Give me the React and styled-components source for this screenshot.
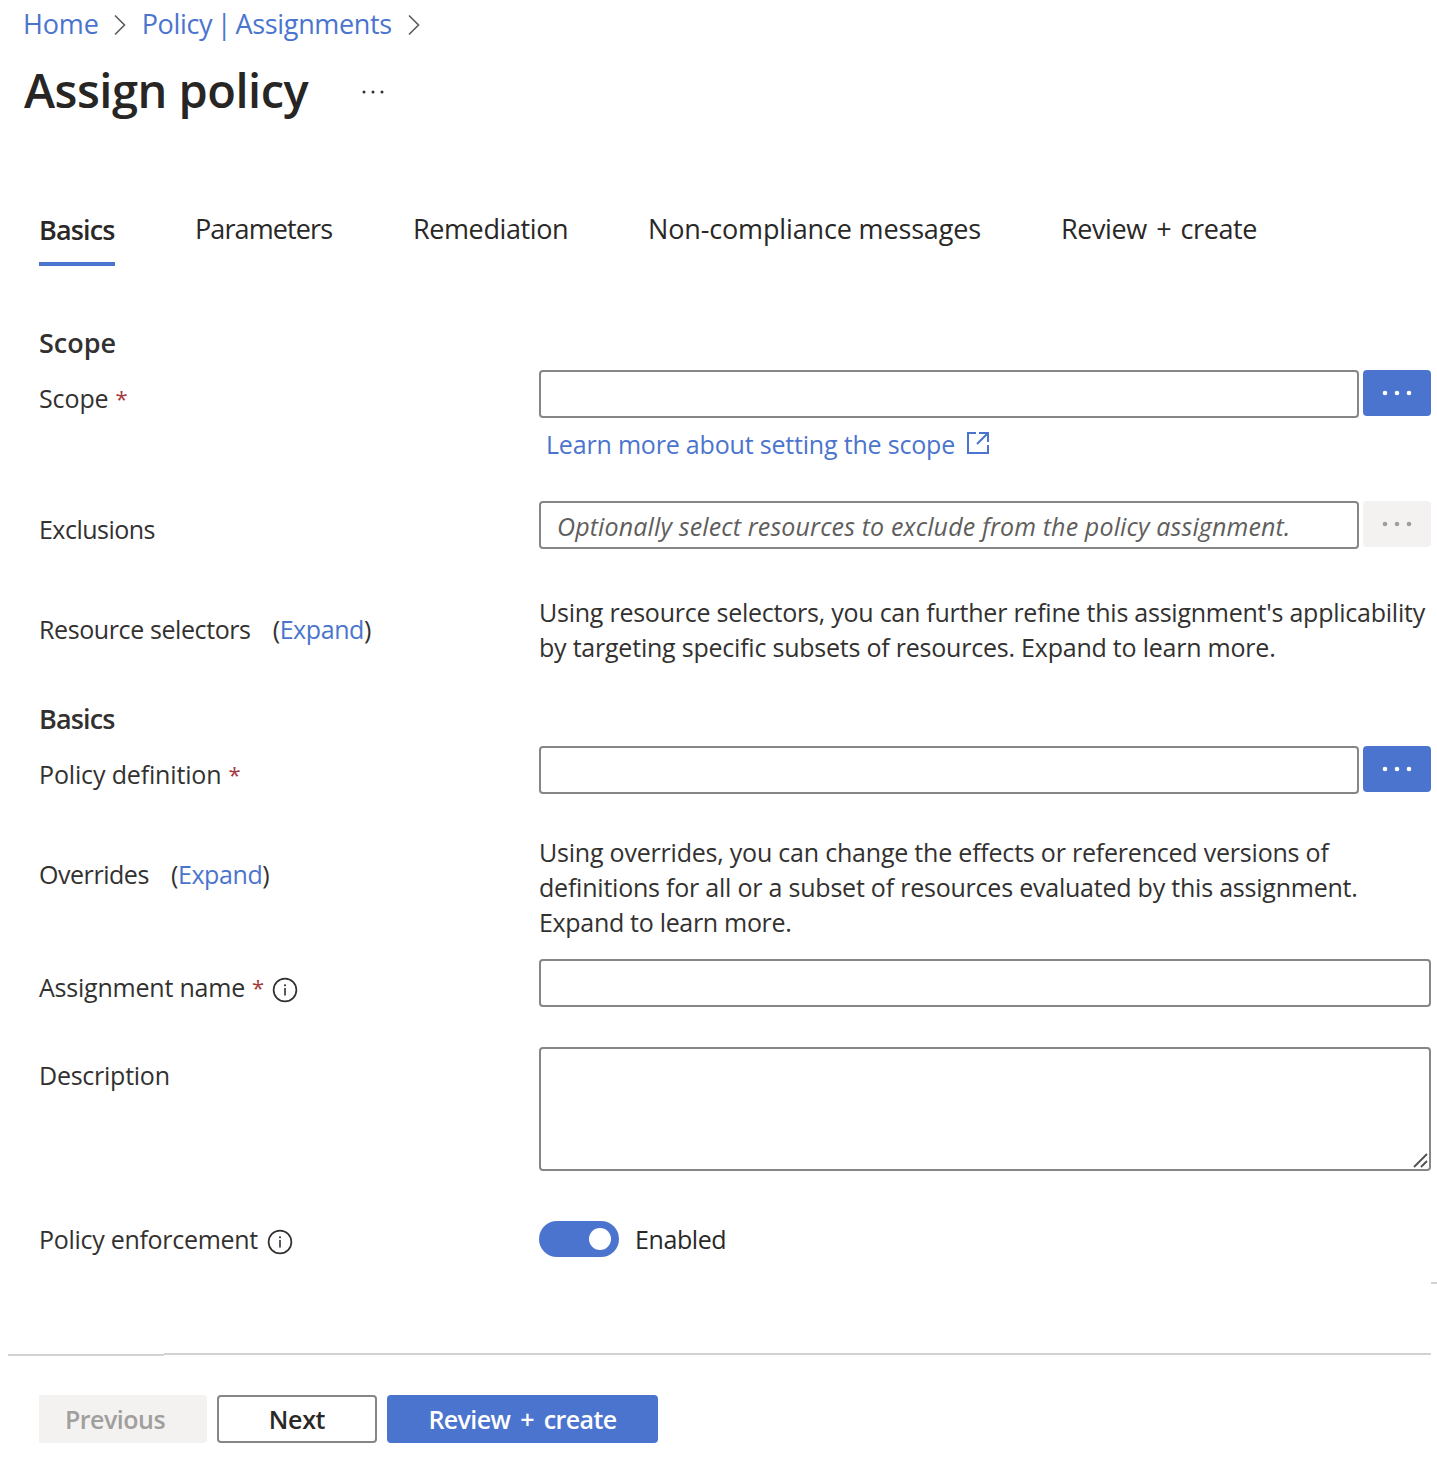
import React from "react";
import styled, { createGlobalStyle } from "styled-components";

const blue = "#4b74ce";
const ink = "#323130";
const line = "#868686";

const Global = createGlobalStyle`
  *, *::before, *::after { box-sizing: border-box; }
  body { margin: 0; background: #fff; }
  button, input, textarea { font: inherit; margin: 0; }
`;

const Page = styled.div`
  width: 1437px;
  height: 1460px;
  overflow: hidden;
  display: flex;
  flex-direction: column;
  background: #fff;
  color: ${ink};
  font-family: "Open Sans", "Noto Sans", sans-serif;
  font-size: 25px;
  line-height: 35px;
`;

const Tracked = styled.span`
  letter-spacing: ${(p) => p.$track || 0}px;
  white-space: nowrap;
`;

const Link = styled.a`
  color: ${blue};
  text-decoration: none;
  white-space: nowrap;
  letter-spacing: ${(p) => p.$track || 0}px;
  word-spacing: ${(p) => p.$words || 0}px;
`;

const Breadcrumb = styled.nav`
  display: flex;
  align-items: flex-start;
  height: 58px;
  padding: 6px 0 0 23px;
  font-size: 27px;
  line-height: 36px;
`;

const Chevron = styled.svg`
  flex: none;
  width: 12px;
  height: 22px;
  margin: 8px ${(p) => p.$after}px 0 ${(p) => p.$before}px;
  fill: none;
  stroke: #5c5b5a;
  stroke-width: 1.6;
`;

const TitleBar = styled.header`
  display: flex;
  height: 153px;
  padding-left: 24px;
`;

const Title = styled.h1`
  margin: 0;
  width: 337px;
  font-size: 47px;
  font-weight: 600;
  line-height: 64px;
  letter-spacing: -0.5px;
  color: #272625;
`;

const TitleMenu = styled.svg`
  width: 24px;
  height: 4px;
  margin-top: 32px;
  fill: ${ink};
`;

const Tabs = styled.div`
  display: flex;
  height: 114px;
  padding-left: 39px;
  font-size: 27px;
  line-height: 36px;
  color: #292827;
`;

const Tab = styled.div`
  flex: none;
  height: 55px;
  width: ${(p) => p.$width}px;
  margin-right: ${(p) => p.$gap}px;
  padding-top: ${(p) => (p.$active ? 1 : 0)}px;
  border-bottom: 4px solid ${(p) => (p.$active ? blue : "transparent")};
  font-weight: ${(p) => (p.$active ? 600 : 400)};
  letter-spacing: ${(p) => p.$track || 0}px;
  word-spacing: ${(p) => p.$words || 0}px;
  white-space: nowrap;
`;

const Heading = styled.h2`
  margin: 0;
  height: 45px;
  padding-left: 39px;
  font-size: 27px;
  font-weight: 600;
  line-height: 36px;
  letter-spacing: ${(p) => p.$track || 0}px;
`;

const Row = styled.div`
  display: grid;
  grid-template-columns: 500px 892px;
  height: ${(p) => p.$height}px;
  padding-left: 39px;
`;

const Label = styled.div`
  display: flex;
  align-items: flex-start;
  padding-top: ${(p) => (p.$top === undefined ? 11 : p.$top)}px;
`;

const Required = styled.span`
  width: 11px;
  margin-left: 7px;
  color: #a4373a;
  font-size: 22px;
  line-height: 34px;
`;

const Expand = styled.span`
  margin-left: ${(p) => p.$gap}px;
  letter-spacing: -0.4px;
`;

const InfoMark = styled.svg`
  width: 26px;
  height: 26px;
  margin: 7px 0 0 ${(p) => p.$gap}px;
`;

const Picker = styled.div`
  display: flex;
  align-items: flex-start;
  gap: 4px;
`;

const Input = styled.input`
  width: ${(p) => (p.$wide ? 892 : 820)}px;
  height: 48px;
  padding: 2px 16px 0;
  border: 2px solid ${line};
  border-radius: 4px;
  background: #fff;
  outline: none;
  letter-spacing: 0.14px;
  &::placeholder { color: #605e5c; font-style: italic; opacity: 1; }
`;

const PickButton = styled.button`
  display: flex;
  justify-content: center;
  width: 68px;
  height: 46px;
  padding: 20px 0 0;
  border: 0;
  border-radius: 4px;
  background: ${(p) => (p.disabled ? "#f3f2f1" : blue)};
  color: ${(p) => (p.disabled ? "#a19f9d" : "#fff")};
  svg { width: 30px; height: 6px; fill: currentColor; }
`;

const LearnMore = styled.div`
  display: flex;
  padding: 9px 0 0 7px;
`;

const ExternalMark = styled.svg`
  width: 24px;
  height: 24px;
  margin: 4px 0 0 11px;
  fill: none;
  stroke: ${blue};
  stroke-width: 2;
`;

const Lines = styled.div`
  display: flex;
  flex-direction: column;
`;

const Area = styled.div`
  display: flex;
  align-items: flex-end;
  justify-content: flex-end;
  width: 892px;
  height: 124px;
  border: 2px solid ${line};
  border-radius: 4px;
`;

const Grip = styled.svg`
  width: 16px;
  height: 16px;
  fill: none;
  stroke: #505050;
  stroke-width: 1.8;
`;

const Switch = styled.div`
  display: flex;
  align-items: center;
  justify-content: flex-end;
  width: 80px;
  height: 36px;
  margin-right: 16px;
  padding-right: 8px;
  border-radius: 18px;
  background: ${blue};
`;

const Knob = styled.span`
  width: 22px;
  height: 22px;
  border-radius: 50%;
  background: #fff;
`;

const SwitchField = styled.div`
  display: flex;
  align-items: flex-start;
`;

const SwitchText = styled.span`
  padding-top: 1px;
  letter-spacing: -0.4px;
  color: #292827;
`;

const EdgeTick = styled.div`
  align-self: flex-end;
  flex: none;
  width: 6px;
  height: 2px;
  background: #d2d2d2;
`;

const Divider = styled.div`
  display: flex;
  flex: none;
  height: 42px;
  margin-top: 69px;
  padding-left: 8px;
`;

const Rule = styled.div`
  width: ${(p) => p.$width}px;
  height: 2px;
  margin-top: ${(p) => p.$drop || 0}px;
  background: #d2d2d2;
`;

const Footer = styled.footer`
  display: flex;
  gap: 10px;
  padding-left: 39px;
`;

const looks = {
  off: `background: #f3f2f1; color: #a19f9d; border-color: #f3f2f1; border-radius: 0 4px 4px 0;`,
  plain: `background: #fff; color: #292827; border-color: ${line};`,
  primary: `background: ${blue}; color: #fff; border-color: ${blue};`,
};

const FootButton = styled.button`
  width: ${(p) => p.$width}px;
  height: 48px;
  padding: 1px ${(p) => p.$shift || 0}px 0 0;
  border: 2px solid;
  border-radius: 4px;
  font-weight: 600;
  line-height: 35px;
  letter-spacing: ${(p) => p.$track || 0}px;
  word-spacing: ${(p) => p.$words || 0}px;
  ${(p) => looks[p.$look]}
`;

const ChevronIcon = (props) => (
  <Chevron viewBox="0 0 12 22" {...props}>
    <path d="M1 1.5 10.5 11 1 20.5" />
  </Chevron>
);

const Dots = () => (
  <svg viewBox="0 0 30 6">
    <circle cx="3" cy="3" r="2.3" />
    <circle cx="15" cy="3" r="2.3" />
    <circle cx="27" cy="3" r="2.3" />
  </svg>
);

const Info = ({ gap }) => (
  <InfoMark viewBox="0 0 26 26" $gap={gap}>
    <circle cx="13" cy="13" r="11.4" fill="none" stroke={ink} strokeWidth="1.7" />
    <rect x="12.2" y="11" width="1.6" height="7.5" fill={ink} />
    <rect x="12.1" y="7.4" width="1.8" height="1.8" fill={ink} />
  </InfoMark>
);

export default function App() {
  return (
    <Page>
      <Global />
      <Breadcrumb>
        <Link $track={-0.15}>Home</Link>
        <ChevronIcon $before={15} $after={16} />
        <Link $track={-0.35} $words={-2.2}>Policy | Assignments</Link>
        <ChevronIcon $before={16} $after={0} />
      </Breadcrumb>
      <TitleBar>
        <Title>Assign policy</Title>
        <TitleMenu viewBox="0 0 24 4">
          <circle cx="3" cy="2" r="1.5" />
          <circle cx="12" cy="2" r="1.5" />
          <circle cx="21" cy="2" r="1.5" />
        </TitleMenu>
      </TitleBar>
      <Tabs>
        <Tab $active $width={76} $gap={80} $track={-0.85}>Basics</Tab>
        <Tab $width={138} $gap={80} $track={-0.9}>Parameters</Tab>
        <Tab $width={155} $gap={80} $track={-0.4}>Remediation</Tab>
        <Tab $width={333} $gap={80} $track={-0.15}>Non-compliance messages</Tab>
        <Tab $width={197} $gap={0} $track={-0.4} $words={2.7}>Review + create</Tab>
      </Tabs>
      <Heading>Scope</Heading>
      <Row $height={131}>
        <Label><Tracked $track={-0.1}>Scope</Tracked><Required>*</Required></Label>
        <div>
          <Picker><Input /><PickButton><Dots /></PickButton></Picker>
          <LearnMore>
            <Link $track={-0.19}>Learn more about setting the scope</Link>
            <ExternalMark viewBox="0 0 24 24">
              <path d="M10 2H2V22H22V14M13 2H22V11M22 2 11 13" />
            </ExternalMark>
          </LearnMore>
        </div>
      </Row>
      <Row $height={94}>
        <Label><Tracked $track={-0.52}>Exclusions</Tracked></Label>
        <Picker>
          <Input placeholder="Optionally select resources to exclude from the policy assignment." />
          <PickButton disabled><Dots /></PickButton>
        </Picker>
      </Row>
      <Row $height={106}>
        <Label $top={17}>
          <Tracked $track={-0.4}>Resource selectors</Tracked>
          <Expand $gap={22}>(<Link $track={-0.4}>Expand</Link>)</Expand>
        </Label>
        <Lines>
          <Tracked $track={-0.24}>Using resource selectors, you can further refine this assignment's applicability</Tracked>
          <Tracked $track={-0.22}>by targeting specific subsets of resources. Expand to learn more.</Tracked>
        </Lines>
      </Row>
      <Heading $track={-0.85}>Basics</Heading>
      <Row $height={89}>
        <Label><Tracked $track={-0.15}>Policy definition</Tracked><Required>*</Required></Label>
        <Picker><Input /><PickButton><Dots /></PickButton></Picker>
      </Row>
      <Row $height={124}>
        <Label $top={22}>
          <Tracked $track={-0.45}>Overrides</Tracked>
          <Expand $gap={22}>(<Link $track={-0.4}>Expand</Link>)</Expand>
        </Label>
        <Lines>
          <Tracked $track={-0.21}>Using overrides, you can change the effects or referenced versions of</Tracked>
          <Tracked $track={-0.22}>definitions for all or a subset of resources evaluated by this assignment.</Tracked>
          <Tracked $track={-0.31}>Expand to learn more.</Tracked>
        </Lines>
      </Row>
      <Row $height={88}>
        <Label>
          <Tracked $track={-0.21}>Assignment name</Tracked><Required>*</Required><Info gap={9} />
        </Label>
        <Input $wide />
      </Row>
      <Row $height={174}>
        <Label><Tracked $track={-0.25}>Description</Tracked></Label>
        <Area>
          <Grip viewBox="0 0 16 16"><path d="M1 14 14 1M8 14 14 8" /></Grip>
        </Area>
      </Row>
      <Row $height={61}>
        <Label $top={1}><Tracked $track={-0.29}>Policy enforcement</Tracked><Info gap={9} /></Label>
        <SwitchField>
          <Switch><Knob /></Switch>
          <SwitchText>Enabled</SwitchText>
        </SwitchField>
      </Row>
      <EdgeTick />
      <Divider>
        <Rule $width={156} $drop={1} />
        <Rule $width={1267} />
      </Divider>
      <Footer>
        <FootButton disabled $look="off" $width={168} $shift={16} $track={-0.5}>Previous</FootButton>
        <FootButton $look="plain" $width={160} $track={-0.3}>Next</FootButton>
        <FootButton $look="primary" $width={271} $track={-0.6} $words={4}>Review + create</FootButton>
      </Footer>
    </Page>
  );
}
